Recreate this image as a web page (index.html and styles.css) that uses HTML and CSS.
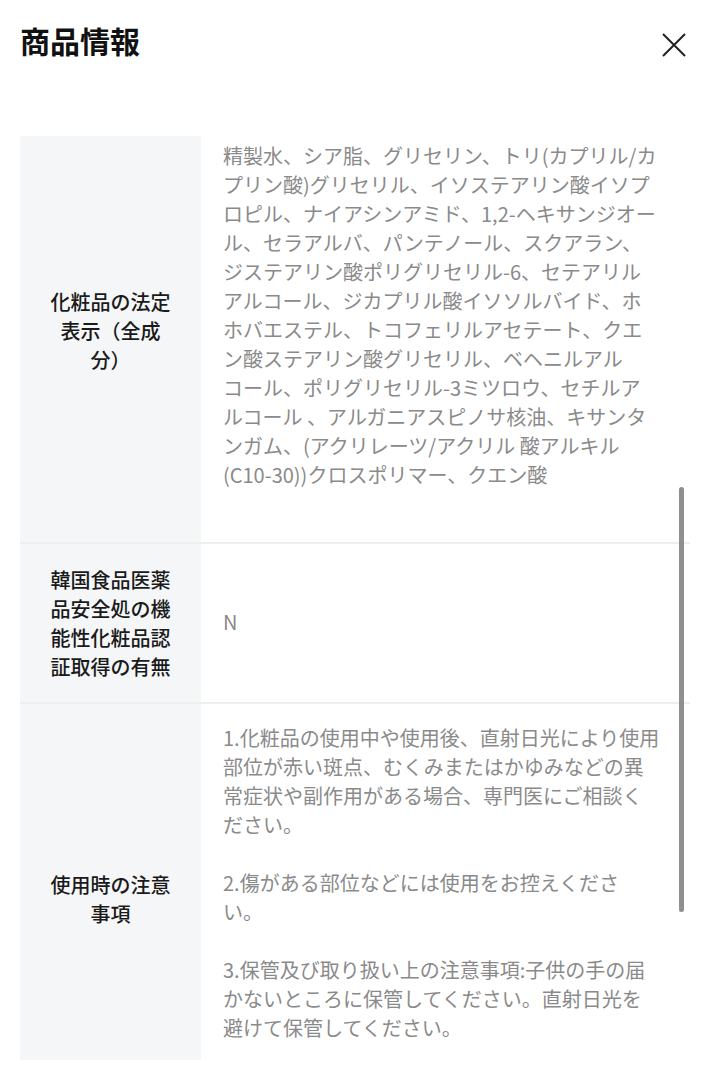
FILE: index.html
```html
<!DOCTYPE html>
<html lang="ja">
<head>
<meta charset="utf-8">
<title>商品情報</title>
<link rel="stylesheet" href="styles.css">
</head>
<body>
<div class="sheet">
  <header class="sheet-head">
    <h1 class="sheet-title">商品情報</h1>
    <button class="close-btn" aria-label="閉じる">
      <svg width="24" height="24" viewBox="0 0 24 24"><path d="M1 1 L23 23 M23 1 L1 23" stroke="#222" stroke-width="2" fill="none"/></svg>
    </button>
  </header>

  <div class="spec">
    <div class="spec-row spec-row--first">
      <div class="spec-label spec-label--ingredients">化粧品の法定<br>表示（全成<br>分）</div>
      <div class="spec-value spec-value--ingredients">精製水、シア脂、グリセリン、トリ(カプリル/カ<br>プリン酸)グリセリル、イソステアリン酸イソプ<br>ロピル、ナイアシンアミド、1,2-ヘキサンジオー<br>ル、セラアルバ、パンテノール、スクアラン、<br>ジステアリン酸ポリグリセリル-6、セテアリル<br>アルコール、ジカプリル酸イソソルバイド、ホ<br>ホバエステル、トコフェリルアセテート、クエ<br>ン酸ステアリン酸グリセリル、ベヘニルアル<br>コール、ポリグリセリル-3ミツロウ、セチルア<br>ルコール 、アルガニアスピノサ核油、キサンタ<br>ンガム、(アクリレーツ/アクリル 酸アルキル<br>(C10-30))クロスポリマー、クエン酸</div>
    </div>
    <div class="spec-row">
      <div class="spec-label spec-label--padded">韓国食品医薬<br>品安全処の機<br>能性化粧品認<br>証取得の有無</div>
      <div class="spec-value spec-value--center">N</div>
    </div>
    <div class="spec-row">
      <div class="spec-label spec-label--notes">使用時の注意<br>事項</div>
      <div class="spec-value spec-value--notes">1.化粧品の使用中や使用後、直射日光により使用<br>部位が赤い斑点、むくみまたはかゆみなどの異<br>常症状や副作用がある場合、専門医にご相談く<br>ださい。<br><br>2.傷がある部位などには使用をお控えくださ<br>い。<br><br>3.保管及び取り扱い上の注意事項:子供の手の届<br>かないところに保管してください。直射日光を<br>避けて保管してください。</div>
    </div>
  </div>

  <div class="scrollbar"></div>
</div>
</body>
</html>
```

FILE: styles.css
```css
* { box-sizing: border-box; }

html, body {
  margin: 0;
  padding: 0;
  background: #ffffff;
}

body {
  font-family: "Noto Sans CJK JP", "Noto Sans", sans-serif;
  color: #1a1a1a;
}

.sheet {
  position: relative;
  width: 710px;
  min-height: 1080px;
  background: #fff;
}

.sheet-head {
  display: flex;
  justify-content: space-between;
  align-items: flex-start;
  padding: 25px 24px 0 20px;
}

.sheet-title {
  margin: 0;
  font-size: 30px;
  line-height: 30px;
  font-weight: 700;
  color: #111;
}

.close-btn {
  margin: 8px 0 0 0;
  padding: 0;
  border: 0;
  background: transparent;
  width: 24px;
  height: 24px;
  display: block;
}
.close-btn svg { display: block; }

.spec {
  margin: 79px 20px 0 20px;
}

.spec-row {
  display: grid;
  grid-template-columns: 181px 1fr;
  border-top: 2px solid #eeeeee;
}
.spec-row--first {
  border-top: 0;
}

.spec-label {
  background: #f5f6f8;
  display: flex;
  align-items: center;
  justify-content: center;
  text-align: center;
  padding: 0 20px;
  font-size: 20px;
  line-height: 29px;
  font-weight: 500;
  color: #1a1a1a;
}
.spec-label--ingredients {
  padding-bottom: 18px;
}
.spec-label--padded {
  padding-top: 21px;
  padding-bottom: 21px;
}
.spec-label--notes {
  padding-top: 34px;
}

.spec-value {
  padding: 21px 20px 16px 22px;
  font-size: 20px;
  line-height: 29px;
  color: #8a8a8a;
  white-space: nowrap;
}
.spec-value--ingredients {
  padding-top: 5px;
  padding-bottom: 53px;
}
.spec-value--center {
  padding-top: 0;
  padding-bottom: 4px;
  display: flex;
  align-items: center;
}
.spec-value--notes {
  padding-top: 19px;
  padding-bottom: 18px;
}

.scrollbar {
  position: absolute;
  top: 487px;
  right: 26px;
  width: 5px;
  height: 425px;
  border-radius: 3px;
  background: #8f8f8f;
}
```
